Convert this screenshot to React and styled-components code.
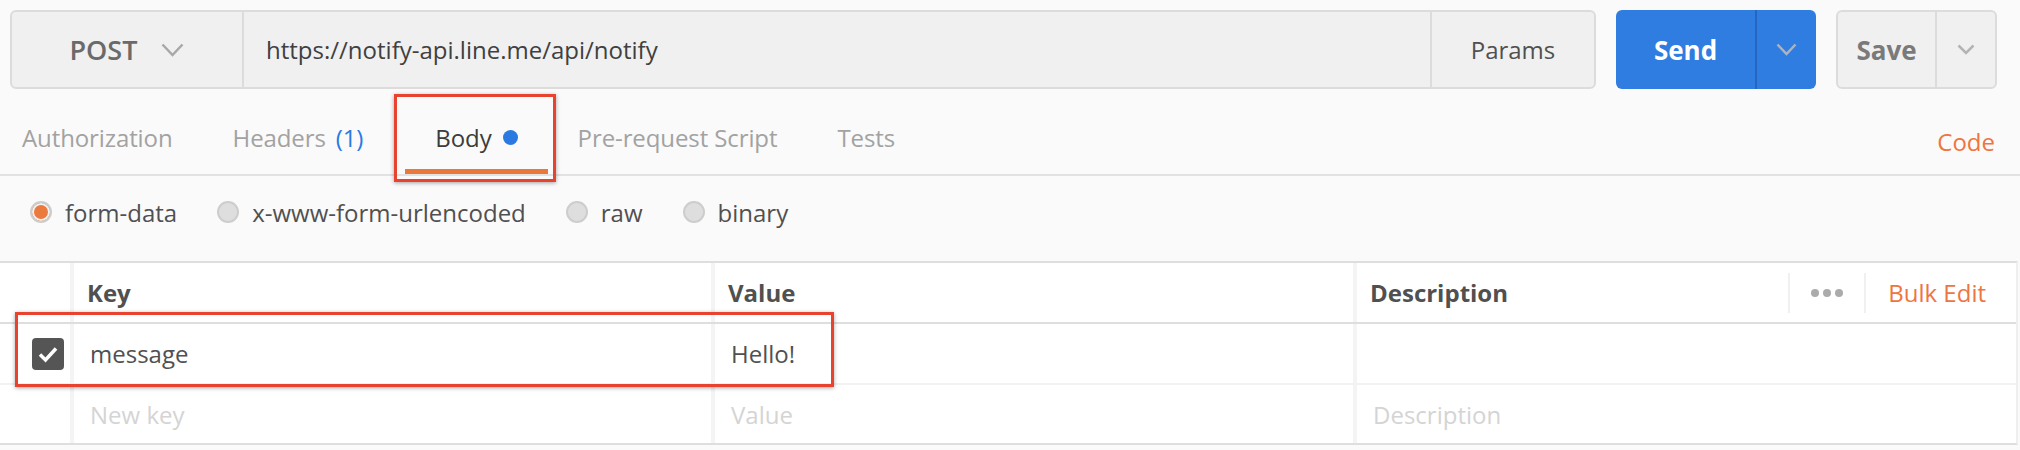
import styled, { createGlobalStyle } from "styled-components";

const GlobalStyle = createGlobalStyle`
  body {
    margin: 0;
    background: #fafafa;
    font-family: "Open Sans", "Liberation Sans", sans-serif;
    color: #505050;
  }
`;

const Page = styled.div`
  width: 2020px;
  height: 450px;
  overflow: hidden;
`;

/* ---------- request bar ---------- */

const TopBar = styled.div`
  display: flex;
  gap: 20px;
  padding: 10px 0 0 10px;
  height: 79px;
`;

const UrlBox = styled.div`
  display: flex;
  width: 1586px;
  height: 79px;
  box-sizing: border-box;
  border: 2px solid #dcdcdc;
  border-radius: 6px;
  background: #f0f0f0;
`;

const MethodSelect = styled.div`
  width: 230px;
  display: flex;
  align-items: center;
  justify-content: center;
  gap: 24px;
  border-right: 2px solid #dcdcdc;
  font-size: 27px;
  font-weight: 600;
  color: #6a6a6a;
`;

const UrlInput = styled.div`
  flex: 1;
  display: flex;
  align-items: center;
  padding-left: 22px;
  font-size: 24px;
  color: #404040;
`;

const ParamsButton = styled.div`
  width: 162px;
  display: flex;
  align-items: center;
  justify-content: center;
  border-left: 2px solid #dcdcdc;
  font-size: 24px;
  color: #505050;
`;

// Props:
// - $primary: Boolean - blue Send button instead of grey Save button
const SplitButton = styled.div`
  display: flex;
  height: 79px;
  box-sizing: border-box;
  border-radius: 6px;
  background: ${(p) => (p.$primary ? "#2f7de1" : "#f0f0f0")};
  border: ${(p) => (p.$primary ? "none" : "2px solid #dcdcdc")};
  font-size: 26px;
  font-weight: 700;
  color: ${(p) => (p.$primary ? "#ffffff" : "#7a7a7a")};
`;

// Props:
// - $width: Number - width in px of the section
// - $divider: String - colour of the right divider line, none if empty
const ButtonPart = styled.div`
  width: ${(p) => p.$width}px;
  display: flex;
  align-items: center;
  justify-content: center;
  border-right: ${(p) => (p.$divider ? `2px solid ${p.$divider}` : "none")};
`;

function Chevron({ width = 23, color = "#a8a8a8" }) {
  const h = Math.round(width / 2);
  return (
    <svg width={width} height={h + 2} viewBox={`0 0 ${width} ${h + 2}`}>
      <polyline
        points={`1.5,1.5 ${width / 2},${h} ${width - 1.5},1.5`}
        fill="none"
        stroke={color}
        strokeWidth="2.5"
      />
    </svg>
  );
}

/* ---------- tabs ---------- */

const TabBar = styled.div`
  display: flex;
  height: 85px;
  border-bottom: 2px solid #e2e2e2;
  padding-right: 25px;
`;

// Props:
// - $active: Boolean - selected tab
// - $first: Boolean - first tab in the row
const Tab = styled.div`
  position: relative;
  display: flex;
  align-items: center;
  padding: 17px 30px 0 ${(p) => (p.$first ? 22 : 30)}px;
  border-bottom: 5px solid ${(p) => (p.$active ? "#e9783b" : "transparent")};
  font-size: 24px;
  letter-spacing: -0.1px;
  color: ${(p) => (p.$active ? "#3c3c3c" : "#a2a2a2")};
`;

const Count = styled.span`
  color: #2a7ae2;
  margin: 0 12px 0 10px;
`;

const Dot = styled.span`
  width: 15px;
  height: 15px;
  border-radius: 50%;
  background: #2a7ae2;
  margin-left: 11px;
`;

const CodeLink = styled.div`
  margin-left: auto;
  display: flex;
  align-items: center;
  padding-top: 20px;
  font-size: 24px;
  color: #f0743e;
`;

// Annotation frame drawn over the screenshot
// Props:
// - $top, $right, $bottom, $left, $width: Number - offsets in px
const Highlight = styled.div`
  position: absolute;
  top: ${(p) => p.$top}px;
  bottom: ${(p) => p.$bottom}px;
  left: ${(p) => p.$left}px;
  ${(p) => (p.$width ? `width: ${p.$width}px;` : `right: ${p.$right}px;`)}
  border: 3px solid #e8432e;
  box-shadow: 0 1px 4px rgba(0, 0, 0, 0.35);
  z-index: 2;
  pointer-events: none;
`;

/* ---------- body type radios ---------- */

const RadioRow = styled.div`
  display: flex;
  align-items: center;
  gap: 40px;
  height: 85px;
  box-sizing: border-box;
  padding: 0 0 13px 30px;
`;

const RadioOption = styled.label`
  display: flex;
  align-items: center;
  gap: 13px;
  font-size: 24px;
  color: #505050;
`;

// Props:
// - $checked: Boolean - selected radio
const RadioMark = styled.span`
  width: 22px;
  height: 22px;
  box-sizing: border-box;
  border-radius: 50%;
  border: 2px solid #cdcdcd;
  background: ${(p) => (p.$checked ? "#ea7a3e" : "#dedede")};
  box-shadow: ${(p) => (p.$checked ? "inset 0 0 0 2px #f2f2f2" : "none")};
`;

/* ---------- key / value table ---------- */

const Table = styled.div`
  width: 2016px;
  background: #ffffff;
  border-top: 2px solid #dedede;
  border-bottom: 2px solid #dedede;
  border-right: 2px solid #efefef;
`;

// Props:
// - $header: Boolean - header row gets a darker bottom line
// - $last: Boolean - last row, no bottom line
const Row = styled.div`
  position: relative;
  display: grid;
  grid-template-columns: 70px 641px 642px 1fr;
  height: ${(p) => (p.$last ? 58 : 59)}px;
  border-bottom: ${(p) =>
    p.$last ? "none" : `2px solid ${p.$header ? "#dedede" : "#f2f2f2"}`};
`;

const HandleCell = styled.div`
  display: flex;
  align-items: center;
  padding-left: 32px;
`;

// Props:
// - $header: Boolean - bold header text
// - $placeholder: Boolean - faded placeholder text
const Cell = styled.div`
  display: flex;
  align-items: center;
  border-left: 4px solid #f4f4f4;
  padding-left: ${(p) => (p.$header ? 13 : 16)}px;
  font-size: 24px;
  font-weight: ${(p) => (p.$header ? 700 : 400)};
  color: ${(p) => (p.$placeholder ? "#d4d4d4" : "#505050")};
`;

const HeaderActions = styled.div`
  margin-left: auto;
  display: flex;
  align-items: center;
  height: 40px;
  padding-right: 30px;
`;

const ActionDivider = styled.span`
  width: 2px;
  height: 40px;
  background: #f0f0f0;
`;

const MoreDots = styled.span`
  display: flex;
  padding: 0 21px;
`;

const BulkEdit = styled.span`
  padding-left: 22px;
  font-weight: 400;
  color: #ee7541;
`;

const Checkbox = styled.span`
  width: 32px;
  height: 32px;
  border-radius: 4px;
  background: #555555;
  display: flex;
  align-items: center;
  justify-content: center;
`;

export default function App() {
  return (
    <Page>
      <GlobalStyle />
      <TopBar>
        <UrlBox>
          <MethodSelect>
            POST
            <Chevron width={23} />
          </MethodSelect>
          <UrlInput>https://notify-api.line.me/api/notify</UrlInput>
          <ParamsButton>Params</ParamsButton>
        </UrlBox>
        <SplitButton $primary>
          <ButtonPart $width={139} $divider="#2566c0">
            Send
          </ButtonPart>
          <ButtonPart $width={59}>
            <Chevron width={21} color="#a9b4c4" />
          </ButtonPart>
        </SplitButton>
        <SplitButton>
          <ButtonPart $width={97} $divider="#dcdcdc">
            Save
          </ButtonPart>
          <ButtonPart $width={58}>
            <Chevron width={18} color="#b4b4b4" />
          </ButtonPart>
        </SplitButton>
      </TopBar>

      <TabBar>
        <Tab $first>Authorization</Tab>
        <Tab>
          Headers<Count>(1)</Count>
        </Tab>
        <Tab $active>
          Body<Dot />
          <Highlight $top={5} $bottom={-13} $left={-11} $right={-8} />
        </Tab>
        <Tab>Pre-request Script</Tab>
        <Tab>Tests</Tab>
        <CodeLink>Code</CodeLink>
      </TabBar>

      <RadioRow>
        <RadioOption>
          <RadioMark $checked />
          form-data
        </RadioOption>
        <RadioOption>
          <RadioMark />
          x-www-form-urlencoded
        </RadioOption>
        <RadioOption>
          <RadioMark />
          raw
        </RadioOption>
        <RadioOption>
          <RadioMark />
          binary
        </RadioOption>
      </RadioRow>

      <Table>
        <Row $header>
          <HandleCell />
          <Cell $header>Key</Cell>
          <Cell $header>Value</Cell>
          <Cell $header>
            Description
            <HeaderActions>
              <ActionDivider />
              <MoreDots>
                <svg width="32" height="10" viewBox="0 0 32 10">
                  <circle cx="4" cy="5" r="4" fill="#ababab" />
                  <circle cx="16" cy="5" r="4" fill="#ababab" />
                  <circle cx="28" cy="5" r="4" fill="#ababab" />
                </svg>
              </MoreDots>
              <ActionDivider />
              <BulkEdit>Bulk Edit</BulkEdit>
            </HeaderActions>
          </Cell>
        </Row>
        <Row>
          <HandleCell>
            <Checkbox>
              <svg width="22" height="18" viewBox="0 0 22 18">
                <polyline
                  points="3,9.5 8.5,15 19,3.5"
                  fill="none"
                  stroke="#ffffff"
                  strokeWidth="3.5"
                />
              </svg>
            </Checkbox>
          </HandleCell>
          <Cell>message</Cell>
          <Cell>Hello!</Cell>
          <Cell />
          <Highlight $top={-12} $bottom={-4} $left={15} $width={813} />
        </Row>
        <Row $last>
          <HandleCell />
          <Cell $placeholder>New key</Cell>
          <Cell $placeholder>Value</Cell>
          <Cell $placeholder>Description</Cell>
        </Row>
      </Table>
    </Page>
  );
}
